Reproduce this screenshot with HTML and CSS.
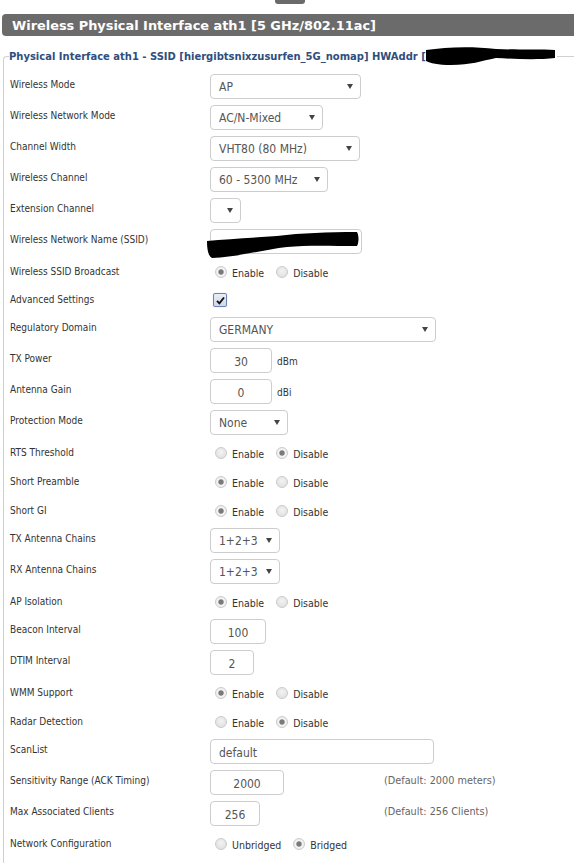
FILE: index.html
```html
<!DOCTYPE html>
<html>
<head>
<meta charset="utf-8">
<title>Wireless Physical Interface</title>
<link rel="stylesheet" href="styles.css">
</head>
<body>
<div class="top-tab"></div>
<h2 class="section-title">Wireless Physical Interface ath1 [5 GHz/802.11ac]</h2>
<fieldset class="iface">
  <legend>Physical Interface ath1 - SSID [hiergibtsnixzusurfen_5G_nomap] HWAddr [<svg class="redact-legend" width="130" height="20" viewBox="0 0 130 20"><path d="M0 4 C20 1 45 0 70 3 C95 4 117 3 129 4 L129 12 C112 14 90 13 70 12 C55 15 45 19 25 19 C12 19 4 17 0 15 Z" fill="#000"/></svg></legend>

  <div class="row"><span class="lbl">Wireless Mode</span><div class="ctl"><div class="select w-151"><span>AP</span><i class="arrow"></i></div></div></div>
  <div class="row"><span class="lbl">Wireless Network Mode</span><div class="ctl"><div class="select w-113"><span>AC/N-Mixed</span><i class="arrow"></i></div></div></div>
  <div class="row"><span class="lbl">Channel Width</span><div class="ctl"><div class="select w-150"><span>VHT80 (80 MHz)</span><i class="arrow"></i></div></div></div>
  <div class="row"><span class="lbl">Wireless Channel</span><div class="ctl"><div class="select w-118"><span>60 - 5300 MHz</span><i class="arrow"></i></div></div></div>
  <div class="row"><span class="lbl">Extension Channel</span><div class="ctl"><div class="select w-31"><span></span><i class="arrow"></i></div></div></div>
  <div class="row"><span class="lbl">Wireless Network Name (SSID)</span><div class="ctl"><div class="ssid-wrap"><div class="input w-152 left"></div><svg class="redact-ssid" width="152" height="29" viewBox="0 0 152 29"><path d="M0 11 C20 9 45 8 70 6 C95 3 120 2 150 2 C152 6 152 12 150 16 C125 16 100 15 80 17 C55 20 30 27 5 28 C1 26 0 18 0 11 Z" fill="#000"/></svg></div></div></div>
  <div class="row radio-row"><span class="lbl">Wireless SSID Broadcast</span><div class="ctl radios"><span class="radio on"></span><span class="opt">Enable</span><span class="radio"></span><span class="opt">Disable</span></div></div>
  <div class="row check-row"><span class="lbl">Advanced Settings</span><div class="ctl"><span class="checkbox"><svg width="9" height="9" viewBox="0 0 9 9"><path d="M1 4.8 L3.4 7.3 L8 1.5" fill="none" stroke="#111" stroke-width="1.9"/></svg></span></div></div>
  <div class="row"><span class="lbl">Regulatory Domain</span><div class="ctl span"><div class="select w-226"><span>GERMANY</span><i class="arrow"></i></div></div></div>
  <div class="row"><span class="lbl">TX Power</span><div class="ctl"><div class="input w-62">30</div><span class="unit">dBm</span></div></div>
  <div class="row"><span class="lbl">Antenna Gain</span><div class="ctl"><div class="input w-62">0</div><span class="unit">dBi</span></div></div>
  <div class="row"><span class="lbl">Protection Mode</span><div class="ctl"><div class="select w-78"><span>None</span><i class="arrow"></i></div></div></div>
  <div class="row radio-row"><span class="lbl">RTS Threshold</span><div class="ctl radios"><span class="radio"></span><span class="opt">Enable</span><span class="radio on"></span><span class="opt">Disable</span></div></div>
  <div class="row radio-row"><span class="lbl">Short Preamble</span><div class="ctl radios"><span class="radio on"></span><span class="opt">Enable</span><span class="radio"></span><span class="opt">Disable</span></div></div>
  <div class="row radio-row"><span class="lbl">Short GI</span><div class="ctl radios"><span class="radio on"></span><span class="opt">Enable</span><span class="radio"></span><span class="opt">Disable</span></div></div>
  <div class="row"><span class="lbl">TX Antenna Chains</span><div class="ctl"><div class="select w-70"><span>1+2+3</span><i class="arrow"></i></div></div></div>
  <div class="row"><span class="lbl">RX Antenna Chains</span><div class="ctl"><div class="select w-70"><span>1+2+3</span><i class="arrow"></i></div></div></div>
  <div class="row radio-row"><span class="lbl">AP Isolation</span><div class="ctl radios"><span class="radio on"></span><span class="opt">Enable</span><span class="radio"></span><span class="opt">Disable</span></div></div>
  <div class="row"><span class="lbl">Beacon Interval</span><div class="ctl"><div class="input w-56">100</div></div></div>
  <div class="row"><span class="lbl">DTIM Interval</span><div class="ctl"><div class="input w-44">2</div></div></div>
  <div class="row radio-row"><span class="lbl">WMM Support</span><div class="ctl radios"><span class="radio on"></span><span class="opt">Enable</span><span class="radio"></span><span class="opt">Disable</span></div></div>
  <div class="row radio-row"><span class="lbl">Radar Detection</span><div class="ctl radios"><span class="radio"></span><span class="opt">Enable</span><span class="radio on"></span><span class="opt">Disable</span></div></div>
  <div class="row"><span class="lbl">ScanList</span><div class="ctl span"><div class="input w-224 left">default</div></div></div>
  <div class="row"><span class="lbl">Sensitivity Range (ACK Timing)</span><div class="ctl"><div class="input w-74">2000</div></div><span class="note">(Default: 2000 meters)</span></div>
  <div class="row"><span class="lbl">Max Associated Clients</span><div class="ctl"><div class="input w-50">256</div></div><span class="note">(Default: 256 Clients)</span></div>
  <div class="row radio-row"><span class="lbl">Network Configuration</span><div class="ctl radios"><span class="radio"></span><span class="opt">Unbridged</span><span class="radio on"></span><span class="opt">Bridged</span></div></div>
</fieldset>
</body>
</html>
```

FILE: styles.css
```css
html, body {
  margin: 0;
  padding: 0;
  background: #fff;
  overflow: hidden;
}
body {
  width: 574px;
  font-family: "DejaVu Sans Condensed", "DejaVu Sans", sans-serif;
  font-stretch: condensed;
  font-size: 10px;
  color: #333;
}
.top-tab {
  width: 30px;
  height: 4px;
  margin-left: 275px;
  background: #6a6a6a;
  border-radius: 0 0 3px 3px;
}
.section-title {
  margin: 10px 0 0 2px;
  height: 22px;
  padding-left: 10px;
  background: #6b6b6b;
  border-radius: 4px 0 0 4px;
  color: #fff;
  font-family: "DejaVu Sans", sans-serif;
  font-stretch: normal;
  font-weight: bold;
  font-size: 12.9px;
  line-height: 23px;
}
.iface {
  margin: 10px 0 0 3px;
  padding: 5px 0 40px 6px;
  border: 1px solid #d0d0d0;
  border-right: 0;
  border-bottom: 0;
  border-radius: 4px 0 0 0;
  min-width: 0;
}
.iface legend {
  padding: 0 1px 0 0;
  margin-left: -1px;
  font-weight: bold;
  font-size: 11.1px;
  color: #2f4e7e;
  white-space: nowrap;
}
.redact-legend {
  vertical-align: -6px;
}
.row {
  display: grid;
  grid-template-columns: 200px 174px auto;
  align-items: start;
  padding: 3px 0;
}
.lbl {
  padding-top: 5px;
  line-height: 12px;
}
.radio-row .lbl {
  padding-top: 6px;
}
.ctl {
  display: flex;
  align-items: center;
  min-height: 25px;
}
.ctl.span {
  grid-column: 2 / span 2;
}
.radio-row .ctl {
  min-height: 23px;
}
.check-row .ctl {
  min-height: 22px;
}
.select, .input {
  box-sizing: border-box;
  height: 25px;
  border: 1px solid #cdcdcd;
  border-radius: 4px;
  background: #fff;
  color: #555;
  font-size: 12px;
}
.select {
  display: flex;
  align-items: center;
  justify-content: space-between;
  padding: 1px 7px 0 8px;
}
.arrow {
  width: 0;
  height: 0;
  border-left: 3px solid transparent;
  border-right: 3px solid transparent;
  border-top: 5px solid #444;
  margin-top: -2px;
}
.input {
  display: flex;
  align-items: center;
  justify-content: center;
  padding-top: 2px;
}
.input.left {
  justify-content: flex-start;
  padding-left: 8px;
}
.w-151 { width: 151px; }
.w-113 { width: 113px; }
.w-150 { width: 150px; }
.w-118 { width: 118px; }
.w-31 { width: 31px; }
.w-152 { width: 152px; }
.w-226 { width: 226px; }
.w-62 { width: 62px; }
.w-78 { width: 78px; }
.w-70 { width: 70px; }
.w-56 { width: 56px; }
.w-44 { width: 44px; }
.w-224 { width: 224px; }
.w-74 { width: 74px; }
.w-50 { width: 50px; }
.unit {
  margin-left: 5px;
  padding-top: 2px;
}
.ssid-wrap {
  position: relative;
}
.redact-ssid {
  position: absolute;
  left: -3px;
  top: 1px;
}
.radios {
  align-items: flex-start;
  padding-top: 6px;
  box-sizing: border-box;
}
.radio {
  box-sizing: border-box;
  width: 12px;
  height: 12px;
  margin-left: 5px;
  border-radius: 50%;
  border: 1px solid #cbcbcb;
  background: radial-gradient(circle at 50% 40%, #f3f3f3 0, #dcdcdc 100%);
}
.radio + .opt {
  margin-left: 5px;
}
.opt + .radio {
  margin-left: 12px;
}
.radio.on {
  background: radial-gradient(circle at 50% 50%, #7a7a7a 0, #7a7a7a 2.2px, #f6f6f6 3.2px, #e2e2e2 100%);
}
.opt {
  padding-top: 1px;
  line-height: 12px;
  font-size: 10.5px;
}
.checkbox {
  box-sizing: border-box;
  width: 14px;
  height: 14px;
  margin-left: 3px;
  border: 1px solid #6f82b5;
  border-radius: 2px;
  background: linear-gradient(#e9edf6, #cfd7ea);
  box-shadow: 0 0 1px #9aa8cc;
  display: flex;
  align-items: center;
  justify-content: center;
}
.note {
  padding-top: 5px;
  line-height: 12px;
  font-size: 10.8px;
  color: #666;
}
```
